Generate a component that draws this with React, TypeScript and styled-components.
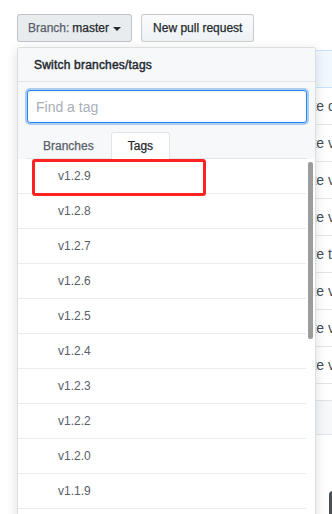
import React from "react";
import styled, { createGlobalStyle } from "styled-components";

const GlobalStyle = createGlobalStyle`
  html, body {
    margin: 0;
    padding: 0;
    background: #ffffff;
    font-family: "Liberation Sans", Arial, sans-serif;
    overflow: hidden;
  }
  * { box-sizing: border-box; }
`;

const Page = styled.div`
  position: relative;
  width: 332px;
  height: 514px;
  overflow: hidden;
  padding: 14px 0 0 17px;
`;

const Toolbar = styled.div`
  display: flex;
  gap: 9px;
`;

const Button = styled.button<{ $active?: boolean; $pad?: number }>`
  display: inline-flex;
  align-items: center;
  height: 28px;
  padding: 0 ${(p) => p.$pad ?? 10}px;
  font-family: inherit;
  font-size: 12px;
  color: #24292e;
  -webkit-text-stroke: 0.25px currentColor;
  border: 1px solid rgba(27, 31, 35, 0.2);
  border-radius: 3px;
  background: ${(p) =>
    p.$active ? "#e9ecef" : "linear-gradient(-180deg, #fafbfc 0%, #eff3f6 90%)"};
  white-space: nowrap;
`;

const Muted = styled.span`
  color: #586069;
  margin-right: 3px;
`;

const Caret = styled.span`
  display: inline-block;
  margin-left: 4px;
  width: 0;
  height: 0;
  border-left: 4px solid transparent;
  border-right: 4px solid transparent;
  border-top: 4px solid #24292e;
  margin-top: 1px;
`;

const CommitBox = styled.div`
  margin-top: 8px;
  width: 440px;
`;

const CommitHeader = styled.div`
  height: 38px;
  background: #f1f8ff;
  border: 1px solid #c8e1ff;
  border-radius: 3px 3px 0 0;
`;

const CommitRow = styled.div`
  display: flex;
  align-items: center;
  height: 37px;
  padding-left: 262px;
  border-bottom: 1px solid #e1e4e8;
  font-size: 14px;
  color: #444d56;
  white-space: nowrap;
`;

const GrayBox = styled.div`
  margin-top: 16px;
  width: 440px;
  height: 35px;
  background: #f6f8fa;
  border: 1px solid #e1e4e8;
`;

const DarkButton = styled.div`
  margin-top: 56px;
  margin-left: 312px;
  width: 40px;
  height: 30px;
  background: #4a4f55;
  border-radius: 4px;
`;

const Dropdown = styled.div`
  position: absolute;
  top: 47px;
  left: 17px;
  width: 299px;
  height: 490px;
  background: #ffffff;
  border: 1px solid rgba(27, 31, 35, 0.15);
  border-radius: 3px;
  box-shadow: 0 3px 12px rgba(27, 31, 35, 0.15);
  overflow: hidden;
  display: flex;
  flex-direction: column;
`;

const MenuHeader = styled.div`
  display: flex;
  align-items: center;
  height: 34px;
  padding: 0 16px;
  background: #f6f8fa;
  border-bottom: 1px solid #e1e4e8;
  font-size: 12px;
  font-weight: 400;
  letter-spacing: 0.2px;
  -webkit-text-stroke: 0.45px currentColor;
  color: #24292e;
`;

const Filter = styled.div`
  background: #f6f8fa;
  padding: 8px 8px 0 9px;
`;

const FilterInput = styled.input`
  display: block;
  width: 280px;
  height: 33px;
  padding: 5px 8px;
  font-family: inherit;
  font-size: 14px;
  color: #24292e;
  background: #ffffff;
  border: 1px solid #2188ff;
  border-radius: 3px;
  outline: none;
  box-shadow: inset 0 1px 2px rgba(27, 31, 35, 0.075), 0 0 0 2px rgba(3, 102, 214, 0.3);
  &::placeholder {
    color: #a8aeb5;
  }
`;

const Tabs = styled.div`
  display: flex;
  margin-top: 9px;
  margin-left: -1px;
  height: 27px;
  border-bottom: 1px solid #e1e4e8;
`;

const Tab = styled.div<{ $selected?: boolean }>`
  display: flex;
  align-items: center;
  height: 27px;
  padding: 0 16px;
  font-size: 12px;
  -webkit-text-stroke: 0.25px currentColor;
  color: ${(p) => (p.$selected ? "#24292e" : "#586069")};
  background: ${(p) => (p.$selected ? "#ffffff" : "transparent")};
  border: 1px solid ${(p) => (p.$selected ? "#e1e4e8" : "transparent")};
  border-bottom: none;
  border-radius: 3px 3px 0 0;
`;

const ListArea = styled.div`
  display: flex;
  flex: 1;
  min-height: 0;
`;

const List = styled.div`
  flex: 1;
`;

const TagRow = styled.div`
  position: relative;
  display: flex;
  align-items: center;
  height: 35px;
  padding-left: 40px;
  border-bottom: 1px solid #eaecef;
  font-size: 12px;
  color: #586069;
`;

const Highlight = styled.div`
  position: absolute;
  left: 14px;
  top: 0;
  width: 174px;
  height: 37px;
  border: 3px solid #ff2222;
  border-radius: 3px;
`;

const ScrollTrack = styled.div`
  width: 9px;
  padding: 3px 2px 0 2px;
`;

const ScrollThumb = styled.div`
  width: 5px;
  height: 177px;
  background: #9c9c9c;
  border-radius: 2px;
`;

const commits = [
  "Update docs",
  "Update version",
  "Update version",
  "Update version",
  "Update tests",
  "Update version",
  "Update version",
  "Update version",
];

const tags = [
  "v1.2.9",
  "v1.2.8",
  "v1.2.7",
  "v1.2.6",
  "v1.2.5",
  "v1.2.4",
  "v1.2.3",
  "v1.2.2",
  "v1.2.0",
  "v1.1.9",
  "v1.1.8",
];

export default function App() {
  return (
    <>
      <GlobalStyle />
      <Page>
        <Toolbar>
          <Button $active>
            <Muted>Branch:</Muted>master
            <Caret />
          </Button>
          <Button $pad={11}>New pull request</Button>
        </Toolbar>
        <CommitBox>
          <CommitHeader />
          {commits.map((c, i) => (
            <CommitRow key={i}>{c}</CommitRow>
          ))}
        </CommitBox>
        <GrayBox />
        <DarkButton />

        <Dropdown>
          <MenuHeader>Switch branches/tags</MenuHeader>
          <Filter>
            <FilterInput placeholder="Find a tag" autoFocus />
            <Tabs>
              <Tab>Branches</Tab>
              <Tab $selected>Tags</Tab>
            </Tabs>
          </Filter>
          <ListArea>
            <List>
              {tags.map((t, i) => (
                <TagRow key={t}>
                  {t}
                  {i === 0 && <Highlight />}
                </TagRow>
              ))}
            </List>
            <ScrollTrack>
              <ScrollThumb />
            </ScrollTrack>
          </ListArea>
        </Dropdown>
      </Page>
    </>
  );
}
